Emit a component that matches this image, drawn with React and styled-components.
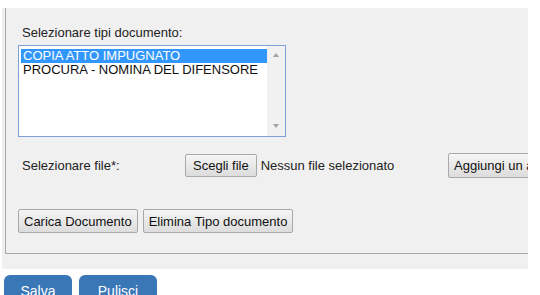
import React from 'react';
import styled, { createGlobalStyle } from 'styled-components';

const GlobalStyle = createGlobalStyle`
    html, body {
        margin: 0;
        padding: 0;
        background: #ffffff;
        overflow: hidden;
        font-family: "Liberation Sans", Arial, sans-serif;
        font-size: 13px;
        color: #222222;
    }
`;

const Page = styled.div`
    width: 540px;
    padding-top: 8px;
`;

const Outer = styled.div`
    width: 526px;
    margin-left: 2px;
    background: #f0f0f0;
    padding-bottom: 15px;
    overflow: hidden;
`;

const Panel = styled.div`
    margin-left: 3px;
    border-left: 1px solid #a8a8a8;
    border-bottom: 1px solid #a8a8a8;
    padding: 17px 0 20px 12px;
`;

const Label = styled.div`
    padding-left: 4px;
    line-height: 15px;
    white-space: nowrap;
`;

const ListBox = styled.div`
    display: flex;
    width: 266px;
    height: 90px;
    margin-top: 5px;
    background: #ffffff;
    border: 1px solid #7f9fd6;
`;

const Options = styled.div`
    flex: 1;
    padding: 3px 0 0 2px;
`;

const Option = styled.div`
    line-height: 14px;
    padding-left: 2px;
    white-space: nowrap;
    background: ${p => (p.$selected ? '#3297fd' : 'transparent')};
    color: ${p => (p.$selected ? '#ffffff' : '#111111')};
`;

const ScrollTrack = styled.div`
    width: 18px;
    background: #f1f1f1;
    display: flex;
    flex-direction: column;
    justify-content: space-between;
    align-items: center;
    padding: 7px 0 8px;
`;

const Arrow = styled.span`
    width: 0;
    height: 0;
    border-left: 3.5px solid transparent;
    border-right: 3.5px solid transparent;
    ${p => (p.$down ? 'border-top: 4px solid #a3a3a3;' : 'border-bottom: 4px solid #a3a3a3;')}
`;

const FileRow = styled.div`
    display: flex;
    align-items: center;
    margin-top: 15px;
    height: 26px;
`;

const FileLabel = styled(Label)`
    width: 163px;
    flex-shrink: 0;
`;

const FileField = styled.div`
    display: flex;
    align-items: center;
    width: 263px;
    flex-shrink: 0;
    gap: 4px;
`;

const FileStatus = styled.span`
    white-space: nowrap;
`;

const GrayButton = styled.button`
    font-family: "Liberation Sans", Arial, sans-serif;
    font-size: 13px;
    color: #111111;
    height: ${p => p.$h || 24}px;
    padding: 0 ${p => p.$px || 5}px;
    white-space: nowrap;
    background: linear-gradient(#f5f5f5, #dcdcdc);
    border: 1px solid #a9a9a9;
    border-radius: 2px;
    flex-shrink: 0;
`;

const ActionRow = styled.div`
    display: flex;
    gap: 5px;
    margin-top: 31px;
`;

const Footer = styled.div`
    display: flex;
    gap: 7px;
    margin: 6px 0 0 4px;
`;

const BlueButton = styled.button`
    width: ${p => p.$w}px;
    height: 26px;
    padding: 5px 0 0;
    background: #3a77b7;
    color: #ffffff;
    border: none;
    border-radius: 6px 6px 0 0;
    font-family: "Liberation Sans", Arial, sans-serif;
    font-size: 14px;
    line-height: 16px;
    text-align: center;
    vertical-align: top;
`;

export default function App() {
    return (
        <Page>
            <GlobalStyle />
            <Outer>
                <Panel>
                    <Label>Selezionare tipi documento:</Label>
                    <ListBox>
                        <Options>
                            <Option $selected>COPIA ATTO IMPUGNATO</Option>
                            <Option>PROCURA - NOMINA DEL DIFENSORE</Option>
                        </Options>
                        <ScrollTrack>
                            <Arrow />
                            <Arrow $down />
                        </ScrollTrack>
                    </ListBox>
                    <FileRow>
                        <FileLabel>Selezionare file*:</FileLabel>
                        <FileField>
                            <GrayButton $h={23} $px={7}>Scegli file</GrayButton>
                            <FileStatus>Nessun file selezionato</FileStatus>
                        </FileField>
                        <GrayButton $h={25}>Aggiungi un altro file</GrayButton>
                    </FileRow>
                    <ActionRow>
                        <GrayButton>Carica Documento</GrayButton>
                        <GrayButton>Elimina Tipo documento</GrayButton>
                    </ActionRow>
                </Panel>
            </Outer>
            <Footer>
                <BlueButton $w={68}>Salva</BlueButton>
                <BlueButton $w={78}>Pulisci</BlueButton>
            </Footer>
        </Page>
    );
}
